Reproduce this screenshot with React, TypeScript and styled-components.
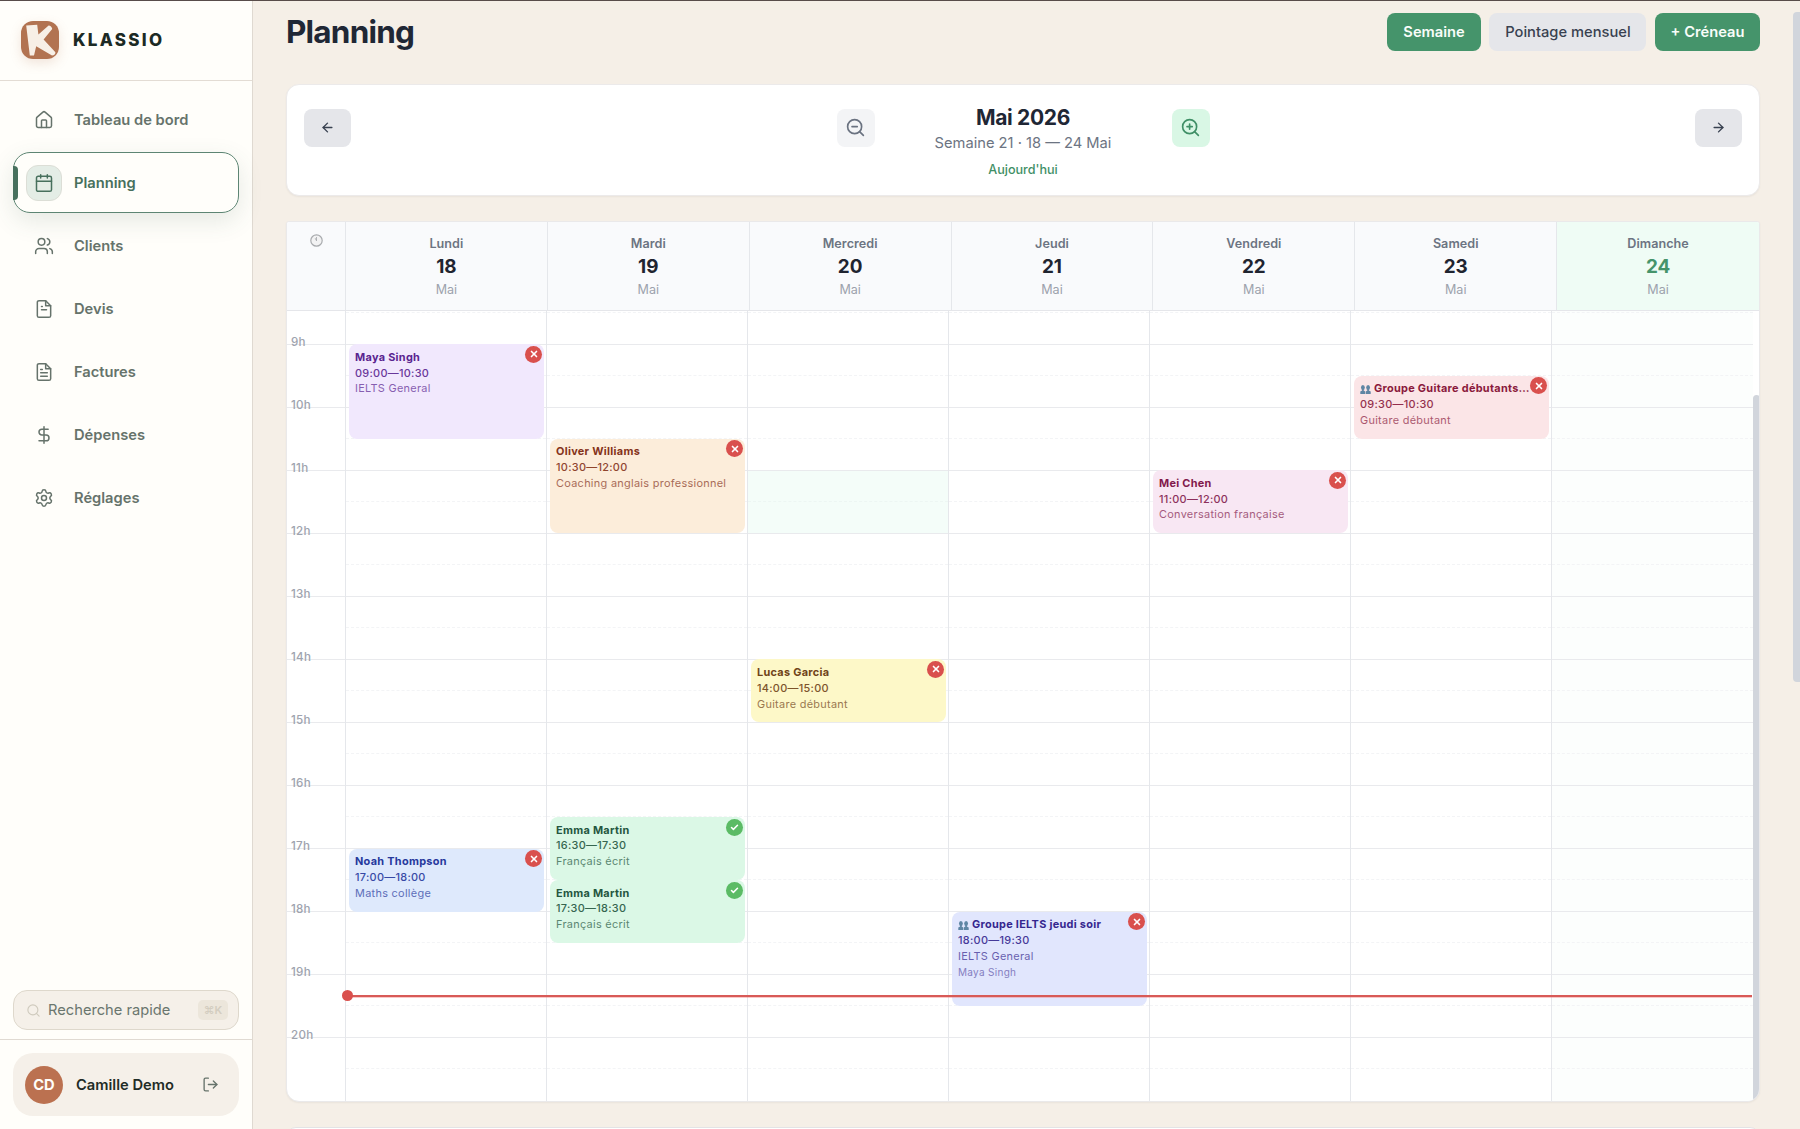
import React from "react";
import styled, { createGlobalStyle, css } from "styled-components";
import {
  ArrowLeft,
  ArrowRight,
  Calendar,
  Check,
  DollarSign,
  House,
  LogOut,
  Search,
  Settings,
  Users,
  X,
  ZoomIn,
  ZoomOut,
} from "lucide-react";

const HOUR = 63.05;
const HALF = HOUR / 2;
const FIRST_LINE = 2.1;
const yOf = (h: number) => FIRST_LINE + (h - 8.5) * HOUR;

const Global = createGlobalStyle`
  * { box-sizing: border-box; }
  html, body { margin: 0; height: 1129px; overflow: hidden; }
  body { background: #f5efe7; font-family: Inter, "Liberation Sans", sans-serif; }
  button { font-family: inherit; border: 0; padding: 0; margin: 0; }
`;

const Shell = styled.div`
  display: flex;
  width: 1800px;
  height: 1129px;
  overflow: hidden;
  border-top: 1px solid #584c4a;
`;

/* ---------- Sidebar ---------- */

const Sidebar = styled.aside`
  width: 253px;
  flex: none;
  display: flex;
  flex-direction: column;
  background: #fffefa;
  border-right: 1px solid #dfd9d1;
`;

const Brand = styled.div`
  height: 80px;
  flex: none;
  display: flex;
  align-items: center;
  gap: 14px;
  padding: 0 0 1px 21px;
  border-bottom: 1px solid #e3dcd4;
`;

const LogoMark = styled.svg`
  width: 38px;
  height: 38px;
  border-radius: 12px;
  box-shadow: 0 4px 12px rgba(180, 110, 75, 0.18);
`;

const BrandName = styled.span`
  font-size: 17px;
  font-weight: 800;
  letter-spacing: 2.3px;
  color: #1c2a24;
`;

const Nav = styled.nav`
  flex: 1;
  display: flex;
  flex-direction: column;
  gap: 2px;
  padding: 8px 13px;
`;

const NavItem = styled.a<{ $active?: boolean }>`
  position: relative;
  height: 61px;
  flex: none;
  display: flex;
  align-items: center;
  gap: 12px;
  padding-left: 12px;
  border: 1px solid transparent;
  border-radius: 17px;
  overflow: visible;
  font-size: 14.7px;
  font-weight: 600;
  color: #66736b;
  ${(p) =>
    p.$active &&
    css`
      color: #47705d;
      border-color: #5d8573;
      box-shadow: 0 8px 24px rgba(60, 90, 75, 0.13);
      &::before {
        content: "";
        position: absolute;
        left: -1px;
        top: 13px;
        width: 5px;
        height: 34px;
        background: #47705d;
        border-radius: 0 4px 4px 0;
      }
    `}
`;

const NavIcon = styled.span<{ $active?: boolean }>`
  width: 36px;
  height: 36px;
  display: grid;
  place-items: center;
  border-radius: 12px;
  border: 1px solid ${(p) => (p.$active ? "#dcded6" : "transparent")};
  background: ${(p) => (p.$active ? "#e4ede6" : "transparent")};
`;

const SearchBox = styled.div`
  height: 40px;
  flex: none;
  margin: 0 13px 9px;
  display: flex;
  align-items: center;
  padding: 0 10px 0 12px;
  gap: 7px;
  background: #f5f0e9;
  border: 1px solid #ded8cc;
  border-radius: 14px;
  font-size: 14.7px;
  color: #6a766e;
`;

const Grow = styled.span`
  flex: 1;
`;

const Kbd = styled.kbd`
  width: 30px;
  height: 20px;
  display: grid;
  place-items: center;
  border-radius: 5px;
  background: #ece6db;
  color: #d3cdc0;
  font: 600 11px Inter, "DejaVu Sans", sans-serif;
`;

const Account = styled.div`
  flex: none;
  height: 90px;
  padding: 13px 13px 14px;
  border-top: 1px solid #e0dad2;
`;

const AccountCard = styled.div`
  height: 63px;
  display: flex;
  align-items: center;
  padding: 0 20px 0 12px;
  gap: 13px;
  border-radius: 20px;
  background: #f5f0e9;
  font-size: 14.7px;
  font-weight: 600;
  color: #1f2c26;
`;

const Avatar = styled.span`
  width: 38px;
  height: 38px;
  display: grid;
  place-items: center;
  border-radius: 50%;
  background: #bb7150;
  color: #fffdf9;
  font-size: 14.7px;
  font-weight: 700;
`;

/* ---------- Main ---------- */

const Main = styled.main`
  flex: 1;
  min-width: 0;
  display: flex;
  flex-direction: column;
  padding: 11px 0 0 33px;
  background: #f5efe7;
`;

const Content = styled.div`
  width: 1474px;
  display: flex;
  flex-direction: column;
`;

const TitleBar = styled.header`
  height: 39px;
  display: flex;
  align-items: center;
  gap: 8.6px;
  padding-right: 0;
`;

const Title = styled.h1`
  flex: 1;
  margin: 0;
  font-size: 31.5px;
  line-height: 38px;
  font-weight: 700;
  letter-spacing: -0.8px;
  color: #1f2735;
`;

const Button = styled.button<{ $primary?: boolean; $w: number }>`
  width: ${(p) => p.$w}px;
  height: 38px;
  border-radius: 8px;
  font-size: 14.7px;
  font-weight: ${(p) => (p.$primary ? 600 : 500)};
  color: ${(p) => (p.$primary ? "#f8fdf9" : "#384150")};
  background: ${(p) => (p.$primary ? "#45946b" : "#e5e6ea")};
`;

const PeriodCard = styled.section`
  height: 112px;
  margin-top: 33px;
  display: flex;
  align-items: flex-start;
  justify-content: space-between;
  padding: 23.5px 17px 0;
  background: #fff;
  border: 1px solid #eceaea;
  border-radius: 13px;
  box-shadow: 0 1px 2px rgba(0, 0, 0, 0.05);
`;

const ArrowButton = styled.button`
  width: 47px;
  height: 38px;
  display: grid;
  place-items: center;
  border-radius: 8px;
  background: #e5e6ea;
  color: #384150;
`;

const PeriodCenter = styled.div`
  display: flex;
  gap: 33px;
  margin-top: 0;
`;

const ZoomButton = styled.button<{ $on?: boolean }>`
  width: 38px;
  height: 38px;
  display: grid;
  place-items: center;
  border-radius: 8px;
  background: ${(p) => (p.$on ? "#d9f7e5" : "#f3f4f6")};
  color: ${(p) => (p.$on ? "#3f8f66" : "#6a7280")};
`;

const Period = styled.div`
  width: 231px;
  margin-top: -5px;
  display: flex;
  flex-direction: column;
  align-items: center;
`;

const Month = styled.div`
  font-size: 21px;
  line-height: 27px;
  font-weight: 700;
  letter-spacing: -0.35px;
  color: #1f2735;
`;

const Range = styled.div`
  font-size: 14.7px;
  line-height: 24px;
  color: #6c7482;
`;

const Today = styled.div`
  margin-top: 5px;
  font-size: 12.6px;
  line-height: 20px;
  font-weight: 500;
  color: #3f8f66;
`;

const CalendarCard = styled.section`
  height: 881px;
  margin-top: 25px;
  display: flex;
  flex-direction: column;
  overflow: hidden;
  background: #fff;
  border: 1px solid #eae9ea;
  border-radius: 3px 3px 13px 13px;
  box-shadow: 0 1px 2px rgba(0, 0, 0, 0.05);
`;

const HeadRow = styled.div`
  height: 89px;
  flex: none;
  display: grid;
  grid-template-columns: 59px repeat(7, 1fr);
  border-bottom: 1px solid #e5e6ea;
`;

const HeadCell = styled.div<{ $today?: boolean }>`
  display: flex;
  flex-direction: column;
  align-items: center;
  padding-top: 12px;
  background: ${(p) => (p.$today ? "#effcf5" : "#f9fafc")};
  border-right: 1px solid #e5e7eb;
  &:last-child {
    border-right: 0;
  }
`;

const DayName = styled.span`
  font-size: 12.6px;
  line-height: 19px;
  font-weight: 600;
  letter-spacing: 0.05px;
  color: #6c7482;
`;

const DayNumber = styled.span<{ $today?: boolean }>`
  font-size: 18.9px;
  line-height: 27px;
  font-weight: 700;
  color: ${(p) => (p.$today ? "#45946b" : "#1f2430")};
`;

const DayMonth = styled.span`
  font-size: 12.6px;
  line-height: 19px;
  color: #9da2ad;
`;

const Body = styled.div`
  position: relative;
  flex: 1;
  min-height: 0;
  display: grid;
  grid-template-columns: 59px repeat(7, 201px) 1fr;
  overflow: hidden;
`;

const TimeColumn = styled.div`
  padding-top: ${yOf(9) - 1}px;
  border-right: 1px solid #e5e7eb;
`;

const TimeSlot = styled.div`
  height: ${HOUR}px;
  padding-left: 4px;
  border-top: 1px solid #e9eaed;
`;

const TimeLabel = styled.span`
  display: block;
  margin-top: -10px;
  font-size: 11.6px;
  line-height: 14px;
  font-weight: 500;
  letter-spacing: 0.25px;
  color: #9ea3ae;
`;

const DayColumn = styled.div<{ $today?: boolean }>`
  position: relative;
  padding-top: ${FIRST_LINE - 1}px;
  border-right: 1px solid #e5e7eb;
  background: ${(p) => (p.$today ? "#fcfefd" : "#fff")};
  &:nth-child(8) {
    border-right: 0;
  }
`;

const Slot = styled.div<{ $half: boolean }>`
  height: ${HALF}px;
  border-top: 1px ${(p) => (p.$half ? "dashed #f3f4f6" : "solid #e9eaed")};
`;

const HoverSlot = styled.div`
  position: absolute;
  left: 0;
  right: 0;
  top: ${yOf(11)}px;
  height: ${HOUR - 1}px;
  background: rgba(228, 250, 240, 0.4);
`;

const EventCard = styled.article<{
  $top: number;
  $height: number;
  $bg: string;
  $fg: string;
}>`
  position: absolute;
  left: 3px;
  top: ${(p) => p.$top}px;
  width: 195px;
  height: ${(p) => p.$height}px;
  padding: 5.6px 6px;
  border-radius: 8px;
  background: ${(p) => p.$bg};
  color: ${(p) => p.$fg};
  font-size: 10.9px;
  line-height: 15.8px;
  letter-spacing: 0.3px;
  overflow: hidden;
`;

const EventTitle = styled.div`
  display: flex;
  align-items: center;
  gap: 3px;
  font-weight: 700;
  white-space: nowrap;
`;

const EventTime = styled.div`
  font-weight: 500;
  opacity: 0.9;
`;

const EventSubject = styled.div`
  opacity: 0.7;
`;

const EventPeople = styled.div`
  font-size: 10px;
  line-height: 14.5px;
  opacity: 0.55;
`;

const Status = styled.span<{ $ok?: boolean }>`
  position: absolute;
  top: 1.6px;
  right: 2px;
  width: 17px;
  height: 17px;
  display: grid;
  place-items: center;
  border-radius: 50%;
  color: #fff;
  background: ${(p) => (p.$ok ? "#5bbb65" : "#d9504d")};
`;

const NowLine = styled.div`
  position: absolute;
  left: 60px;
  right: 7px;
  top: ${yOf(19.33) - 1}px;
  height: 2px;
  background: #d9545199;
  background: #d85a57;
  box-shadow: 0 1px 0 rgba(240, 120, 120, 0.4);
  &::before {
    content: "";
    position: absolute;
    left: -5px;
    top: -4.5px;
    width: 11px;
    height: 11px;
    border-radius: 50%;
    background: #d9504d;
  }
`;

const BodyScroll = styled.div`
  width: 7px;
  margin-top: 84px;
  border-radius: 4px;
  background: #d1d5dc;
  justify-self: end;
`;

const NextCard = styled.div`
  height: 20px;
  margin-top: 25px;
  background: #fff;
  border: 1px solid #e3e3e5;
  border-radius: 13px;
`;

const PageScroll = styled.div`
  width: 7px;
  height: 670px;
  margin: 11px 0 0 auto;
  flex: none;
  border-radius: 4px 0 0 4px;
  background: #d1d5dc;
`;

/* ---------- Drawings ---------- */

const KLogo = () => (
  <LogoMark viewBox="0 0 38 38">
    <rect width="38" height="38" fill="#b27351" />
    <path
      d="M5.2 4.6 16.2 3.8 17.4 13.6 27.6 4.4Q30.5 4.6 31.2 8L22.6 18.4 34.4 31.2Q34.6 34.2 31 34.6L15.2 25.2 13 34.4 8.8 34.6Z"
      fill="#f7efe6"
    />
  </LogoMark>
);

const FileIcon = ({ lines }: { lines: string[] }) => (
  <svg
    width="20"
    height="20"
    viewBox="0 0 24 24"
    fill="none"
    stroke="currentColor"
    strokeWidth="1.8"
    strokeLinecap="round"
    strokeLinejoin="round"
  >
    <path d="M14 2H6a2 2 0 0 0-2 2v16a2 2 0 0 0 2 2h12a2 2 0 0 0 2-2V8z" />
    <path d="M14 2v6h6" />
    {lines.map((d) => (
      <path key={d} d={d} />
    ))}
  </svg>
);

const ClockFace = () => (
  <svg width="13" height="13" viewBox="0 0 13 13">
    <circle cx="6.5" cy="6.5" r="5.7" fill="#f2f2f3" stroke="#a9abae" strokeWidth="1.2" />
    <path d="M6.5 6.8V3M6.5 6.8 5.2 4.2" stroke="#9a9c9f" strokeWidth="0.7" fill="none" />
  </svg>
);

const GroupGlyph = () => (
  <svg width="11" height="11" viewBox="0 0 11 11">
    <g fill="#5f86a4">
      <ellipse cx="2.9" cy="3.5" rx="1.9" ry="2.5" />
      <ellipse cx="8.1" cy="3.5" rx="1.9" ry="2.5" />
      <path d="M2.1 5h1.6v1.6L5.2 7.5V10H.3V7.5l1.8-.9zM7.3 5h1.6v1.6l1.8.9V10H5.8V7.5l1.5-.9z" />
    </g>
  </svg>
);

/* ---------- Data ---------- */

const icon = { size: 20, strokeWidth: 1.8 };

const navItems = [
  { label: "Tableau de bord", glyph: <House {...icon} /> },
  { label: "Planning", glyph: <Calendar {...icon} />, active: true },
  { label: "Clients", glyph: <Users {...icon} /> },
  { label: "Devis", glyph: <FileIcon lines={["M9 9h1", "M9 13h6"]} /> },
  { label: "Factures", glyph: <FileIcon lines={["M8 9h2", "M8 13h8", "M8 17h8"]} /> },
  { label: "Dépenses", glyph: <DollarSign {...icon} /> },
  { label: "Réglages", glyph: <Settings {...icon} /> },
];

type Ev = {
  start: number;
  end: number;
  title: string;
  time: string;
  subject: string;
  people?: string;
  group?: boolean;
  ok?: boolean;
  bg: string;
  fg: string;
};

const days: { name: string; n: number; today?: boolean; hover?: boolean; events: Ev[] }[] = [
  {
    name: "Lundi",
    n: 18,
    events: [
      { start: 9, end: 10.5, title: "Maya Singh", time: "09:00—10:30", subject: "IELTS General", bg: "#f1e8fd", fg: "#5a2490" },
      { start: 17, end: 18, title: "Noah Thompson", time: "17:00—18:00", subject: "Maths collège", bg: "#dee9fc", fg: "#26389c" },
    ],
  },
  {
    name: "Mardi",
    n: 19,
    events: [
      { start: 10.5, end: 12, title: "Oliver Williams", time: "10:30—12:00", subject: "Coaching anglais professionnel", bg: "#fcedda", fg: "#85331a" },
      { start: 16.5, end: 17.5, title: "Emma Martin", time: "16:30—17:30", subject: "Français écrit", ok: true, bg: "#dbf8e6", fg: "#24563f" },
      { start: 17.5, end: 18.5, title: "Emma Martin", time: "17:30—18:30", subject: "Français écrit", ok: true, bg: "#dbf8e6", fg: "#24563f" },
    ],
  },
  {
    name: "Mercredi",
    n: 20,
    hover: true,
    events: [
      { start: 14, end: 15, title: "Lucas Garcia", time: "14:00—15:00", subject: "Guitare débutant", bg: "#fdf8c8", fg: "#704318" },
    ],
  },
  {
    name: "Jeudi",
    n: 21,
    events: [
      { start: 18, end: 19.5, title: "Groupe IELTS jeudi soir", time: "18:00—19:30", subject: "IELTS General", people: "Maya Singh", group: true, bg: "#e1e6fd", fg: "#35278f" },
    ],
  },
  {
    name: "Vendredi",
    n: 22,
    events: [
      { start: 11, end: 12, title: "Mei Chen", time: "11:00—12:00", subject: "Conversation française", bg: "#f8e7f3", fg: "#821a4c" },
    ],
  },
  {
    name: "Samedi",
    n: 23,
    events: [
      { start: 9.5, end: 10.5, title: "Groupe Guitare débutants…", time: "09:30—10:30", subject: "Guitare débutant", group: true, bg: "#fbe5e7", fg: "#8a1a3c" },
    ],
  },
  { name: "Dimanche", n: 24, today: true, events: [] },
];

const hours = [9, 10, 11, 12, 13, 14, 15, 16, 17, 18, 19, 20];

export default function App() {
  return (
    <>
      <Global />
      <Shell>
        <Sidebar>
          <Brand>
            <KLogo />
            <BrandName>KLASSIO</BrandName>
          </Brand>
          <Nav>
            {navItems.map((n) => (
              <NavItem key={n.label} $active={n.active}>
                <NavIcon $active={n.active}>{n.glyph}</NavIcon>
                {n.label}
              </NavItem>
            ))}
          </Nav>
          <SearchBox>
            <Search size={15} strokeWidth={1.8} color="#cfcabd" />
            Recherche rapide
            <Grow />
            <Kbd>⌘K</Kbd>
          </SearchBox>
          <Account>
            <AccountCard>
              <Avatar>CD</Avatar>
              Camille Demo
              <Grow />
              <LogOut size={17} strokeWidth={1.9} color="#66736b" />
            </AccountCard>
          </Account>
        </Sidebar>
        <Main>
          <Content>
            <TitleBar>
              <Title>Planning</Title>
              <Button $primary $w={93.5}>Semaine</Button>
              <Button $w={157}>Pointage mensuel</Button>
              <Button $primary $w={105}>+ Créneau</Button>
            </TitleBar>
            <PeriodCard>
              <ArrowButton>
                <ArrowLeft size={15} strokeWidth={2.2} />
              </ArrowButton>
              <PeriodCenter>
                <ZoomButton>
                  <ZoomOut size={21} strokeWidth={1.9} />
                </ZoomButton>
                <Period>
                  <Month>Mai 2026</Month>
                  <Range>Semaine 21 · 18 — 24 Mai</Range>
                  <Today>Aujourd'hui</Today>
                </Period>
                <ZoomButton $on>
                  <ZoomIn size={21} strokeWidth={1.9} />
                </ZoomButton>
              </PeriodCenter>
              <ArrowButton>
                <ArrowRight size={15} strokeWidth={2.2} />
              </ArrowButton>
            </PeriodCard>
            <CalendarCard>
              <HeadRow>
                <HeadCell>
                  <ClockFace />
                </HeadCell>
                {days.map((d) => (
                  <HeadCell key={d.name} $today={d.today}>
                    <DayName>{d.name}</DayName>
                    <DayNumber $today={d.today}>{d.n}</DayNumber>
                    <DayMonth>Mai</DayMonth>
                  </HeadCell>
                ))}
              </HeadRow>
              <Body>
                <TimeColumn>
                  {hours.map((h) => (
                    <TimeSlot key={h}>
                      <TimeLabel>{h}h</TimeLabel>
                    </TimeSlot>
                  ))}
                </TimeColumn>
                {days.map((d) => (
                  <DayColumn key={d.name} $today={d.today}>
                    {Array.from({ length: 25 }, (_, i) => (
                      <Slot key={i} $half={i % 2 === 0} />
                    ))}
                    {d.hover && <HoverSlot />}
                    {d.events.map((e) => (
                      <EventCard
                        key={e.start}
                        $top={yOf(e.start) - 0.5}
                        $height={(e.end - e.start) * HOUR}
                        $bg={e.bg}
                        $fg={e.fg}
                      >
                        <EventTitle>
                          {e.group && <GroupGlyph />}
                          {e.title}
                        </EventTitle>
                        <EventTime>{e.time}</EventTime>
                        <EventSubject>{e.subject}</EventSubject>
                        {e.people && <EventPeople>{e.people}</EventPeople>}
                        <Status $ok={e.ok}>
                          {e.ok ? <Check size={9} strokeWidth={4} /> : <X size={10} strokeWidth={4} />}
                        </Status>
                      </EventCard>
                    ))}
                  </DayColumn>
                ))}
                <BodyScroll />
                <NowLine />
              </Body>
            </CalendarCard>
            <NextCard />
          </Content>
        </Main>
        <PageScroll />
      </Shell>
    </>
  );
}
